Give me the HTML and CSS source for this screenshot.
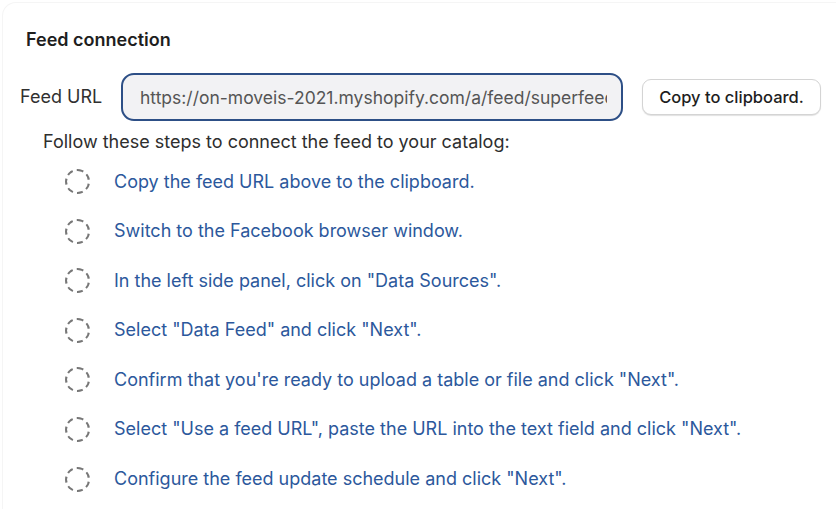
FILE: index.html
```html
<!DOCTYPE html>
<html lang="en">
<head>
<meta charset="utf-8">
<title>Feed connection</title>
<link rel="stylesheet" href="styles.css">
</head>
<body>
<section class="card">
  <h2 class="title">Feed connection</h2>
  <div class="url-row">
    <label class="url-label" for="feed">Feed URL</label>
    <input id="feed" class="url-input" type="text" value="https://on-moveis-2021.myshopify.com/a/feed/superfeed.xml" readonly>
    <button class="copy-btn" type="button">Copy to clipboard.</button>
  </div>
  <p class="intro">Follow these steps to connect the feed to your catalog:</p>
  <ul class="steps">
    <li class="step"><span class="dot"></span><span class="step-text">Copy the feed URL above to the clipboard.</span></li>
    <li class="step"><span class="dot"></span><span class="step-text">Switch to the Facebook browser window.</span></li>
    <li class="step"><span class="dot"></span><span class="step-text">In the left side panel, click on "Data Sources".</span></li>
    <li class="step"><span class="dot"></span><span class="step-text">Select "Data Feed" and click "Next".</span></li>
    <li class="step"><span class="dot"></span><span class="step-text">Confirm that you're ready to upload a table or file and click "Next".</span></li>
    <li class="step"><span class="dot"></span><span class="step-text">Select "Use a feed URL", paste the URL into the text field and click "Next".</span></li>
    <li class="step"><span class="dot"></span><span class="step-text">Configure the feed update schedule and click "Next".</span></li>
  </ul>
</section>
</body>
</html>
```
FILE: styles.css
```css
* { box-sizing: border-box; }
html, body { margin: 0; padding: 0; background: #fff; }
body {
  font-family: Inter, "Open Sans", "Liberation Sans", sans-serif;
  color: #222;
  width: 836px;
  height: 509px;
  overflow: hidden;
}
.card {
  margin: 2px 0 0 2px;
  height: 507px;
  border: 1px solid #f5f5f5;
  border-bottom: none;
  border-right: none;
  border-radius: 14px 0 0 0;
  padding: 27px 0 0 23px;
}
.title {
  margin: 0;
  font-size: 18px;
  font-weight: 600;
  line-height: 20px;
  color: #1e1e1e;
}
.url-row {
  display: flex;
  align-items: center;
  margin-top: 23px;
  margin-left: -6px;
}
.url-label {
  font-size: 18px;
  line-height: 22px;
  color: #303030;
  width: 101px;
}
.url-input {
  width: 502px;
  height: 48px;
  border: 2px solid #2d4f86;
  border-radius: 13px;
  background: #f2f2f4;
  padding: 0 14px 0 17px;
  font-family: inherit;
  font-size: 17.5px;
  color: #555;
  outline: none;
}
.copy-btn {
  margin-left: 19px;
  width: 179px;
  height: 36px;
  background: #fff;
  border: 1px solid #d4d4d4;
  border-radius: 9px;
  box-shadow: 0 1px 1px rgba(0,0,0,0.12);
  font-family: inherit;
  font-size: 16.5px;
  font-weight: 500;
  color: #1e1e1e;
}
.intro {
  margin: 11px 0 0 17px;
  font-size: 18px;
  line-height: 20px;
  color: #2e2e2e;
}
.steps {
  list-style: none;
  margin: 17px 0 0 39px;
  padding: 0;
  display: flex;
  flex-direction: column;
  gap: 24.6px;
}
.step {
  display: flex;
  align-items: center;
  height: 25px;
}
.dot {
  width: 25px;
  height: 25px;
  border: 2px dashed #777;
  border-radius: 50%;
  flex: none;
}
.step-text {
  margin-left: 24px;
  font-size: 18px;
  line-height: 22px;
  color: #2c589c;
}
```
